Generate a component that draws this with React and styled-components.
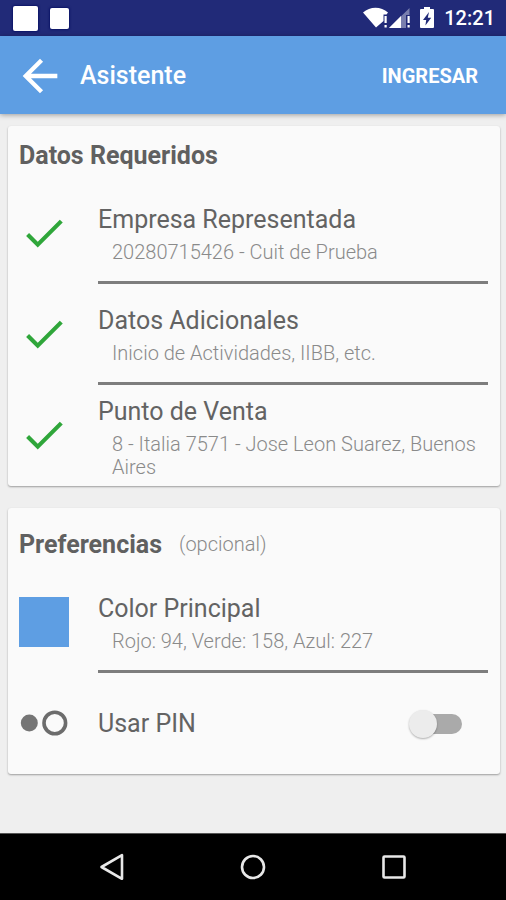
import { useState } from "react";
import styled, { createGlobalStyle } from "styled-components";

const GlobalStyle = createGlobalStyle`
  *, *::before, *::after {
    box-sizing: border-box;
  }
  body {
    margin: 0;
    background-color: #efefef;
    font-family: Roboto, "Noto Sans", sans-serif;
  }
`;

const Screen = styled.div`
  display: flex;
  flex-direction: column;
  min-height: 100vh;
`;

// Barra de estado del sistema
const StatusBar = styled.div`
  display: flex;
  align-items: center;
  justify-content: space-between;
  height: 36px;
  padding: 0 11px 0 13px;
  background-color: #212a78;
  color: #fff;
`;

const Notifications = styled.div`
  display: flex;
  align-items: center;
  gap: 12px;
`;

const Notification = styled.span`
  width: ${props => props.$small ? "19px" : "25px"};
  height: ${props => props.$small ? "21px" : "25px"};
  border-radius: 2px;
  background-color: #fff;
  box-shadow: 0 0 2px 1px #0c1468;
`;

const SystemIcons = styled.div`
  display: flex;
  align-items: center;
  svg {
    display: block;
  }
`;

const Clock = styled.span`
  margin-left: 8px;
  font-size: 20px;
  line-height: 24px;
  font-weight: 500;
`;

// Barra superior de la aplicación
const Toolbar = styled.header`
  display: flex;
  align-items: center;
  height: 78px;
  padding: 2px 20px 0 14px;
  background-color: #5e9ee3;
  color: #fff;
  box-shadow: 0 1px 5px rgba(0, 0, 0, 0.35);
`;

const IconButton = styled.button`
  display: flex;
  padding: 0;
  border: 0;
  background: none;
  color: inherit;
  cursor: pointer;
`;

const ToolbarTitle = styled.h1`
  flex: 1;
  margin: 0 0 0 14px;
  font-size: 25px;
  line-height: 32px;
  font-weight: 500;
`;

const ActionButton = styled.button`
  padding: 8px;
  border: 0;
  background: none;
  color: inherit;
  font-family: inherit;
  font-size: 20px;
  line-height: 24px;
  font-weight: 700;
  text-transform: uppercase;
  cursor: pointer;
`;

const Content = styled.main`
  display: flex;
  flex: 1;
  flex-direction: column;
  gap: 22px;
  padding: 12px 6px 22px 8px;
`;

const Card = styled.section`
  padding: ${props => props.$spaced ? "7px" : "0"} 12px 0 11px;
  border-radius: 3px;
  background-color: #fafafa;
  box-shadow: 0 1px 2px rgba(0, 0, 0, 0.35);
`;

const CardHeader = styled.div`
  display: flex;
  align-items: center;
  gap: 17px;
  height: 57px;
  padding-top: 2px;
`;

const CardTitle = styled.h2`
  margin: 0;
  color: #606060;
  font-size: 25px;
  line-height: 32px;
  font-weight: 700;
`;

const Hint = styled.span`
  color: #8a8a8a;
  font-size: 20px;
  line-height: 23px;
  font-weight: 300;
`;

const List = styled.ul`
  margin: 0;
  padding: 0;
  list-style: none;
`;

const Row = styled.li`
  display: flex;
  gap: 29px;
  min-height: 101px;
`;

const IconCell = styled.div`
  display: flex;
  flex: none;
  align-items: center;
  justify-content: center;
  width: 50px;
  padding-bottom: 2px;
`;

const RowBody = styled.div`
  display: flex;
  flex: 1;
  flex-direction: column;
  justify-content: center;
  border-bottom: ${props => props.$last ? "0" : "3px solid #7d7d7d"};
`;

const RowTitle = styled.div`
  color: #636363;
  font-size: 25px;
  line-height: 38px;
`;

const RowDetail = styled.div`
  margin-top: 2px;
  padding-left: 14px;
  color: #8a8a8a;
  font-size: 20px;
  line-height: 23px;
  font-weight: 300;
`;

const Swatch = styled.div`
  width: 50px;
  height: 50px;
  background-color: #5e9ee3;
`;

const SwitchLine = styled.label`
  display: flex;
  align-items: center;
  justify-content: space-between;
  padding-right: 26px;
  color: #636363;
  font-size: 25px;
  line-height: 38px;
  cursor: pointer;
`;

const Switch = styled.input`
  appearance: none;
  display: flex;
  align-items: center;
  width: 50px;
  height: 20px;
  margin: 0;
  border-radius: 10px;
  background-color: ${props => props.checked ? "#aecef1" : "#aaa"};
  cursor: pointer;
  &::before {
    content: "";
    width: 28px;
    height: 28px;
    margin-left: ${props => props.checked ? "25px" : "-3px"};
    border-radius: 50%;
    background-color: ${props => props.checked ? "#5e9ee3" : "#ececec"};
    box-shadow: 0 1px 2px rgba(0, 0, 0, 0.3);
  }
`;

// Botones de navegación del sistema
const NavBar = styled.nav`
  display: flex;
  align-items: center;
  justify-content: center;
  gap: 113px;
  height: 67px;
  border-top: 1px solid #555;
  background-color: #000;
  color: #e8e8e8;
`;

function WifiIcon() {
  return (
    <svg width="26" height="22" viewBox="0 0 26 22" aria-hidden="true">
      <path d="M0 5.500C7-1 18-1 25 5.500L23.500 7.500h-3v6.500l-7.500 6.500z" fill="#fff" />
      <path d="M21.500 9h2.200v7h-2.200zM21.500 18h2.200v2.500h-2.200z" fill="#fff" />
    </svg>
  );
}

function SignalIcon() {
  return (
    <svg width="22" height="22" viewBox="0 0 22 22" aria-hidden="true">
      <path d="M20.500 1v7H17v13H0z" fill="#fff" opacity="0.4" />
      <path d="M12 9v12H0z" fill="#fff" />
      <path d="M18.500 9h2.200v7h-2.200zM18.500 18h2.200v2.500h-2.200z" fill="#fff" />
    </svg>
  );
}

function BatteryIcon() {
  return (
    <svg width="25" height="22" viewBox="0 0 25 22" aria-hidden="true">
      <path d="M13 0h6v2h3a1 1 0 0 1 1 1v17a1 1 0 0 1-1 1H10a1 1 0 0 1-1-1V3a1 1 0 0 1 1-1h3z" fill="#fff" />
      <path d="M18 5l-6 8h3.200l-.8 5.500 5.800-7.700h-3.400z" fill="#212a78" />
    </svg>
  );
}

function BackIcon() {
  return (
    <svg width="52" height="52" viewBox="0 0 24 24" fill="currentColor" aria-hidden="true">
      <path d="M20 11H7.830l5.590-5.590L12 4l-8 8 8 8 1.410-1.410L7.830 13H20z" />
    </svg>
  );
}

function CheckIcon() {
  return (
    <svg width="50" height="50" viewBox="0 0 24 24" fill="#2fa63a" role="img" aria-label="Completo">
      <path d="M9 16.170L4.830 12l-1.420 1.410L9 19 21 7l-1.410-1.410z" />
    </svg>
  );
}

function PinIcon() {
  return (
    <svg width="50" height="28" viewBox="0 0 50 28" aria-hidden="true">
      <circle cx="10.300" cy="14" r="8.500" fill="#757575" />
      <circle cx="35.800" cy="14" r="10.800" fill="none" stroke="#6c6c6c" strokeWidth="3.600" />
    </svg>
  );
}

const requiredData = [
  { title: "Empresa Representada", detail: "20280715426 - Cuit de Prueba" },
  { title: "Datos Adicionales", detail: "Inicio de Actividades, IIBB, etc." },
  { title: "Punto de Venta", detail: "8 - Italia 7571 - Jose Leon Suarez, Buenos Aires" },
];

export default function App() {
  const [usePin, setUsePin] = useState(false);
  return (
    <Screen>
      <GlobalStyle />
      <StatusBar>
        <Notifications>
          <Notification />
          <Notification $small />
        </Notifications>
        <SystemIcons>
          <WifiIcon />
          <SignalIcon />
          <BatteryIcon />
          <Clock>12:21</Clock>
        </SystemIcons>
      </StatusBar>
      <Toolbar>
        <IconButton aria-label="Volver"><BackIcon /></IconButton>
        <ToolbarTitle>Asistente</ToolbarTitle>
        <ActionButton>Ingresar</ActionButton>
      </Toolbar>
      <Content>
        <Card>
          <CardHeader>
            <CardTitle>Datos Requeridos</CardTitle>
          </CardHeader>
          <List>
            {requiredData.map((item, index) => (
              <Row key={item.title}>
                <IconCell><CheckIcon /></IconCell>
                <RowBody $last={index === requiredData.length - 1}>
                  <RowTitle>{item.title}</RowTitle>
                  <RowDetail>{item.detail}</RowDetail>
                </RowBody>
              </Row>
            ))}
          </List>
        </Card>
        <Card $spaced>
          <CardHeader>
            <CardTitle>Preferencias</CardTitle>
            <Hint>(opcional)</Hint>
          </CardHeader>
          <List>
            <Row>
              <IconCell><Swatch /></IconCell>
              <RowBody>
                <RowTitle>Color Principal</RowTitle>
                <RowDetail>Rojo: 94, Verde: 158, Azul: 227</RowDetail>
              </RowBody>
            </Row>
            <Row>
              <IconCell><PinIcon /></IconCell>
              <RowBody $last>
                <SwitchLine>
                  Usar PIN
                  <Switch
                    type="checkbox"
                    role="switch"
                    checked={usePin}
                    onChange={() => setUsePin(prev => !prev)}
                  />
                </SwitchLine>
              </RowBody>
            </Row>
          </List>
        </Card>
      </Content>
      <NavBar>
        <IconButton aria-label="Atrás">
          <svg width="28" height="28" viewBox="0 0 28 28" fill="none" stroke="currentColor" strokeWidth="2.600" strokeLinejoin="round">
            <path d="M24 2.200v23.600L3.500 14z" />
          </svg>
        </IconButton>
        <IconButton aria-label="Inicio">
          <svg width="28" height="28" viewBox="0 0 28 28" fill="none" stroke="currentColor" strokeWidth="2.600">
            <circle cx="14" cy="14" r="11" />
          </svg>
        </IconButton>
        <IconButton aria-label="Recientes">
          <svg width="28" height="28" viewBox="0 0 28 28" fill="none" stroke="currentColor" strokeWidth="2.600">
            <rect x="3.500" y="3.500" width="21" height="21" rx="1" />
          </svg>
        </IconButton>
      </NavBar>
    </Screen>
  );
}
